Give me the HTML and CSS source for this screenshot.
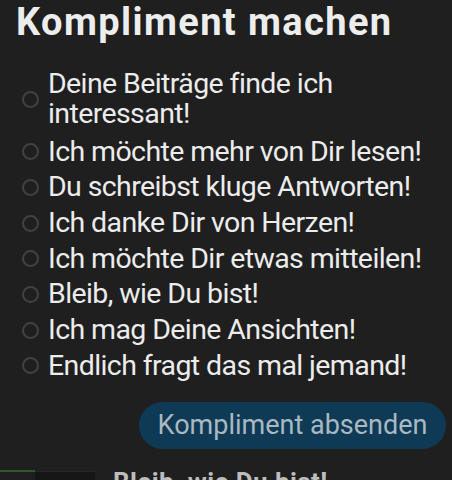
FILE: index.html
```html
<!DOCTYPE html>
<html lang="de">
<head>
<meta charset="utf-8">
<link rel="stylesheet" href="styles.css">
</head>
<body>
<div class="page">
  <h1 class="title">Kompliment machen</h1>
  <ul class="options">
    <li class="option option--wrap"><span class="radio"></span><span class="label">Deine Beiträge finde ich interessant!</span></li>
    <li class="option"><span class="radio"></span><span class="label">Ich möchte mehr von Dir lesen!</span></li>
    <li class="option"><span class="radio"></span><span class="label">Du schreibst kluge Antworten!</span></li>
    <li class="option"><span class="radio"></span><span class="label">Ich danke Dir von Herzen!</span></li>
    <li class="option"><span class="radio"></span><span class="label">Ich möchte Dir etwas mitteilen!</span></li>
    <li class="option"><span class="radio"></span><span class="label">Bleib, wie Du bist!</span></li>
    <li class="option"><span class="radio"></span><span class="label">Ich mag Deine Ansichten!</span></li>
    <li class="option"><span class="radio"></span><span class="label">Endlich fragt das mal jemand!</span></li>
  </ul>
  <div class="actions">
    <button class="send">Kompliment absenden</button>
  </div>
  <div class="under">
    <span class="under-green"></span>
    <span class="under-dark"></span>
    <span class="under-text">Bleib, wie Du bist!</span>
  </div>
</div>
</body>
</html>
```

FILE: styles.css
```css
html, body {
  margin: 0;
  padding: 0;
  background: #1f1f1f;
}
.page {
  width: 452px;
  height: 480px;
  overflow: hidden;
  font-family: Roboto, "Noto Sans", sans-serif;
  color: #ececec;
  display: flex;
  flex-direction: column;
}
.title {
  margin: 0;
  padding: 0 0 0 16px;
  font-size: 38px;
  font-weight: 700;
  line-height: 44px;
  letter-spacing: 1.4px;
  color: #ededed;
  white-space: nowrap;
}
.options {
  list-style: none;
  margin: 25px 0 0 0;
  padding: 0 0 0 22px;
  display: flex;
  flex-direction: column;
  gap: 5.7px;
}
.option {
  display: flex;
  align-items: center;
  gap: 9px;
}
.option--wrap {
  margin-bottom: 2px;
}
.radio {
  flex: none;
  width: 13px;
  height: 13px;
  border: 2px solid #424242;
  border-radius: 50%;
}
.label {
  flex: 1;
  font-size: 28.5px;
  line-height: 30px;
  letter-spacing: -0.6px;
  color: #ececec;
}
.actions {
  display: flex;
  justify-content: flex-end;
  padding: 0 6px 0 0;
  margin-top: 21px;
}
.send {
  height: 47px;
  width: 307px;
  border: none;
  border-radius: 24px;
  background: #0e3a55;
  color: #a9b8c2;
  font-family: Roboto, sans-serif;
  font-size: 27px;
  letter-spacing: 0;
  padding: 0;
}
.under {
  margin-top: 17px;
  display: flex;
  align-items: flex-start;
  height: 20px;
}
.under-green {
  width: 35px;
  height: 2px;
  margin-top: 4px;
  background: #2d5a2a;
}
.under-dark {
  width: 60px;
  height: 20px;
  background: #161616;
  margin-top: 5px;
  border-top: 1px solid #262626;
}
.under-text {
  margin-left: 18px;
  margin-top: 3px;
  font-size: 26px;
  font-weight: 700;
  line-height: 26px;
  letter-spacing: 0.4px;
  color: #bdbdbd;
  white-space: nowrap;
}
```
